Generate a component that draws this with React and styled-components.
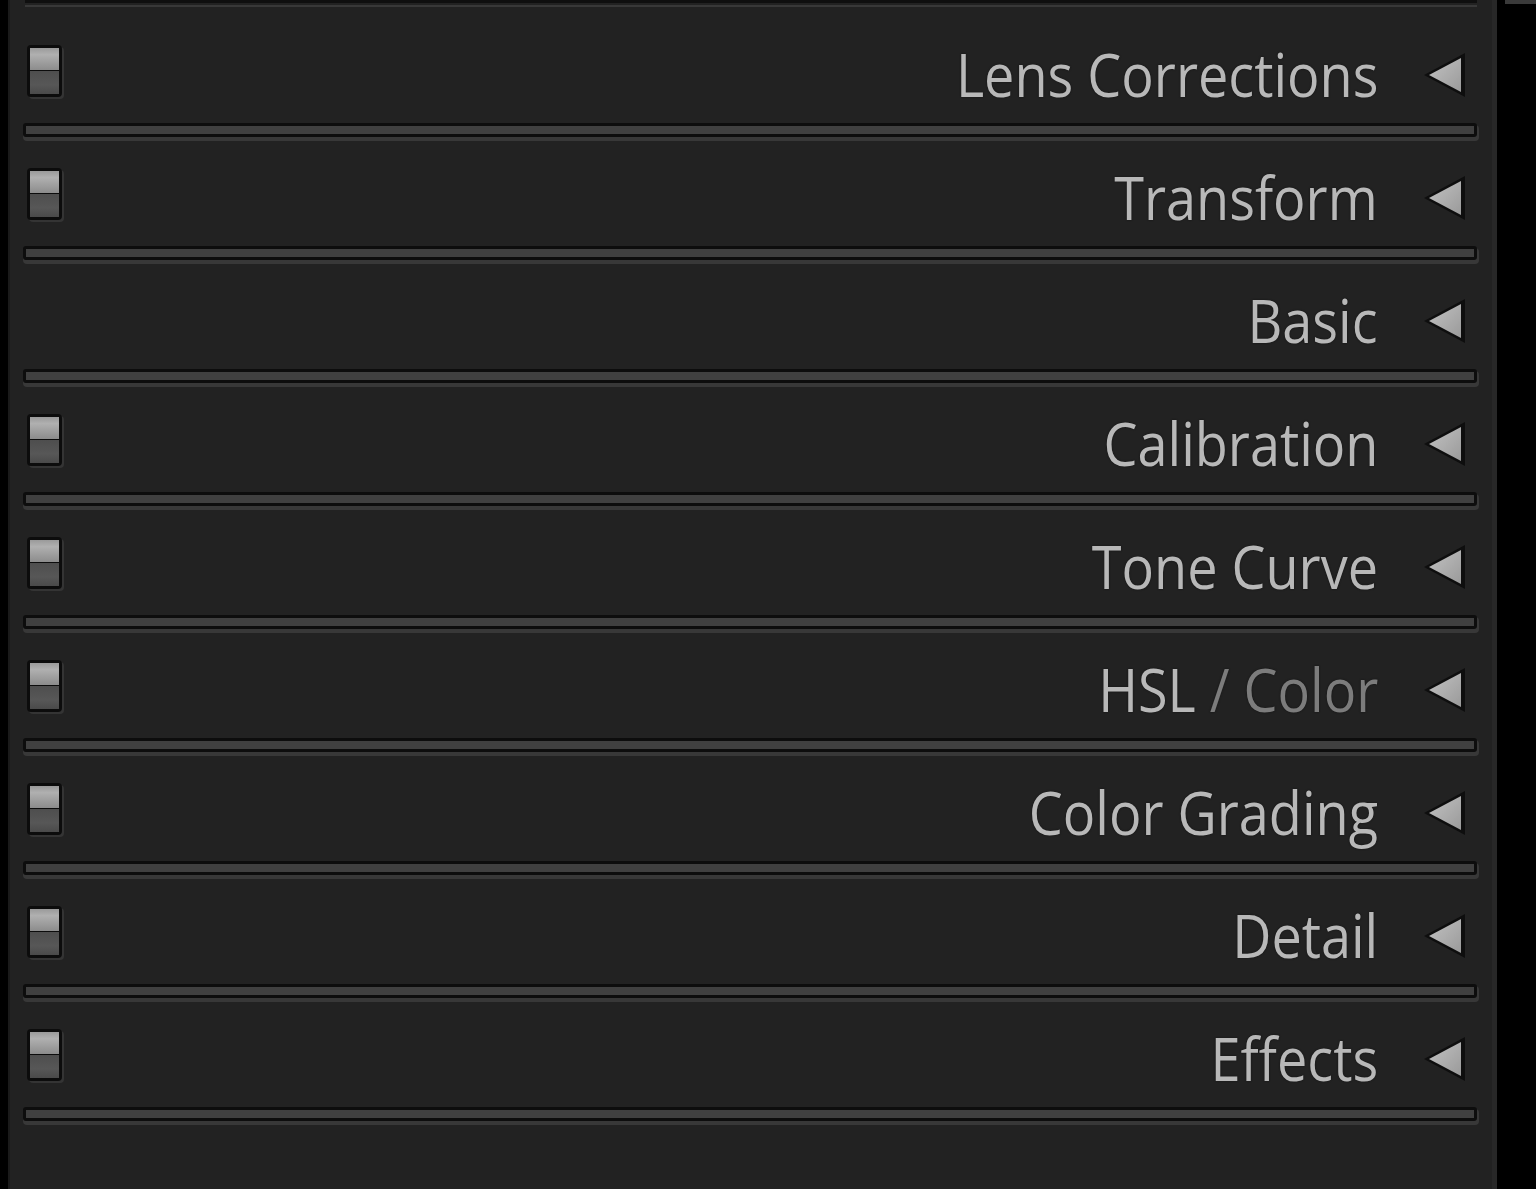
import React from "react";
import styled, { createGlobalStyle } from "styled-components";

const GlobalStyle = createGlobalStyle`
  html, body { margin: 0; padding: 0; background: #000; }
  #root { height: 1189px; }
`;

const Page = styled.div`
  display: flex;
  height: 1189px;
  width: 1536px;
  background: #000;
  padding-left: 8px;
  box-sizing: border-box;
  overflow: hidden;
`;

const Panel = styled.div`
  width: 1489px;
  flex: none;
  height: 100%;
  background: #222222;
  border-left: 2px solid #1a1a1a;
  border-right: 5px solid #282828;
  box-sizing: border-box;
  display: flex;
  flex-direction: column;
  padding: 0 15px 0 13px;
`;

const Gutter = styled.div`
  flex: 1;
  display: flex;
  flex-direction: column;
  padding-left: 8px;
`;

const GutterCap = styled.div`
  height: 4px;
  background: #3a3a3a;
`;

const TopEdge = styled.div`
  height: 8px;
  display: flex;
  flex-direction: column;
  margin-left: 2px;
  &::before {
    content: "";
    height: 3px;
    background: #0f0f0f;
  }
  &::after {
    content: "";
    margin-top: 2px;
    height: 2px;
    background: #383838;
  }
`;

const Header = styled.div`
  display: flex;
  align-items: center;
  height: ${(p) => (p.$first ? "115px" : "105px")};
  padding-top: ${(p) => (p.$first ? "10px" : "0")};
  box-sizing: border-box;
`;

const Toggle = styled.div`
  margin-left: 4px;
  width: 35px;
  height: 52px;
  box-sizing: border-box;
  border: 3px solid #0c0c0c;
  border-radius: 4px;
  display: flex;
  flex-direction: column;
  box-shadow: 2px 2px 0 #343434;
  background: #0c0c0c;
  gap: 1px;
`;

const ToggleTop = styled.div`
  flex: 1;
  background: linear-gradient(180deg, #9a9a9a 0%, #b0b0b0 30%, #8c8c8c 100%);
`;

const ToggleBottom = styled.div`
  flex: 1;
  background: linear-gradient(180deg, #4e4e4e 0%, #575757 60%, #4a4a4a 100%);
`;

const Label = styled.span`
  margin-left: auto;
  font-family: "Open Sans", "Noto Sans", sans-serif;
  font-size: 60px;
  line-height: 1;
  color: #b8b8b8;
  white-space: nowrap;
  padding-top: 7px;
  transform: scaleX(0.9);
  transform-origin: right center;
  text-shadow: 0 0 2px #111;
`;

const Dim = styled.span`
  color: #7c7c7c;
`;

const Arrow = styled.svg`
  margin-left: 45px;
  margin-right: 10px;
  margin-top: 8px;
  width: 44px;
  height: 46px;
  flex: none;
`;

const Separator = styled.div`
  height: 14px;
  box-sizing: border-box;
  border: 3px solid #0d0d0d;
  border-radius: 3px;
  background: #404040;
  box-shadow: 1px 3px 0 1px #383838;
  margin-bottom: 4px;
`;

const sections = [
  { label: "Lens Corrections", toggle: true },
  { label: "Transform", toggle: true },
  { label: "Basic", toggle: false },
  { label: "Calibration", toggle: true },
  { label: "Tone Curve", toggle: true },
  { label: "HSL", dim: " / Color", toggle: true },
  { label: "Color Grading", toggle: true },
  { label: "Detail", toggle: true },
  { label: "Effects", toggle: true },
];

function TriangleIcon() {
  return (
    <Arrow viewBox="0 0 44 46">
      <polygon points="1,23 42,1 42,45" fill="#0e0e0e" />
      <defs>
        <linearGradient id="tri" x1="0" y1="0" x2="1" y2="1">
          <stop offset="0" stopColor="#c2c2c2" />
          <stop offset="1" stopColor="#9a9a9a" />
        </linearGradient>
      </defs>
      <polygon points="6,23 38,6 38,40" fill="url(#tri)" />
    </Arrow>
  );
}

export default function App() {
  return (
    <>
      <GlobalStyle />
      <Page>
        <Panel>
          <TopEdge />
          {sections.map((s, i) => (
            <React.Fragment key={s.label}>
              <Header $first={i === 0}>
                {s.toggle && (
                  <Toggle>
                    <ToggleTop />
                    <ToggleBottom />
                  </Toggle>
                )}
                <Label>
                  {s.label}
                  {s.dim && <Dim>{s.dim}</Dim>}
                </Label>
                <TriangleIcon />
              </Header>
              <Separator />
            </React.Fragment>
          ))}
        </Panel>
        <Gutter>
          <GutterCap />
        </Gutter>
      </Page>
    </>
  );
}
